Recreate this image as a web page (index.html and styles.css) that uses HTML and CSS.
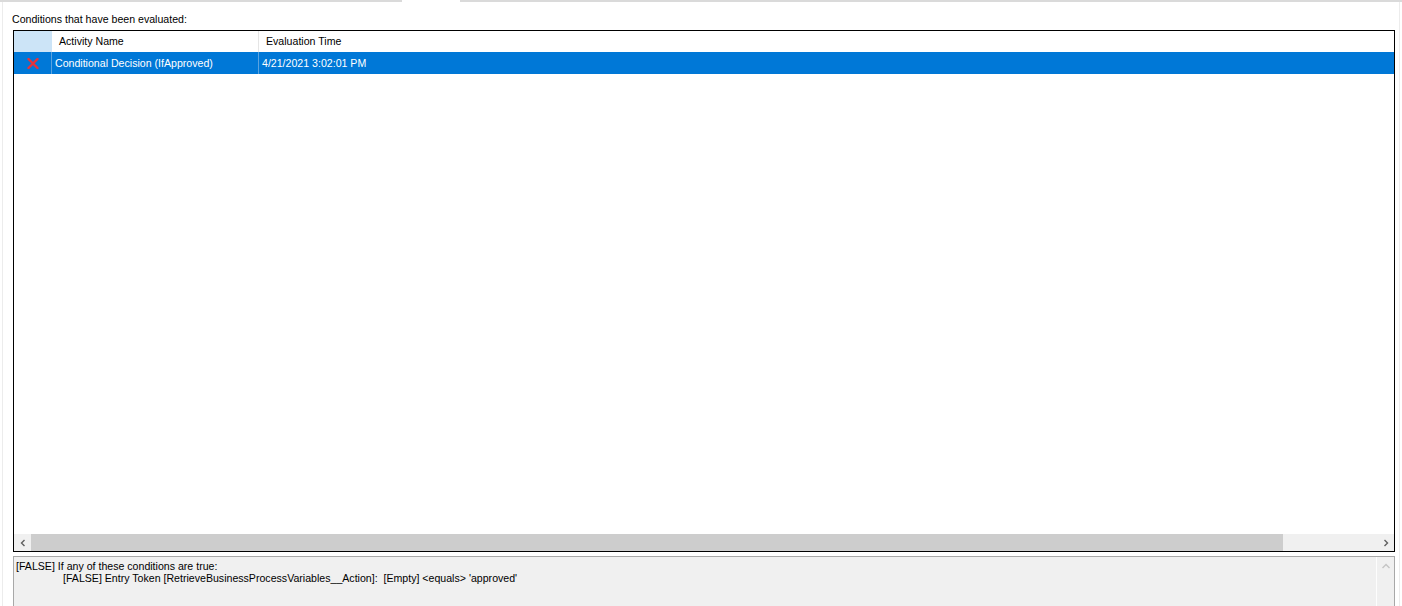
FILE: index.html
```html
<!DOCTYPE html>
<html lang="en">
<head>
  <meta charset="UTF-8" />
  <title>Evaluated Conditions</title>
  <link rel="stylesheet" href="styles.css">
</head>
<body>

  <!-- tab strip edge -->
  <div class="tab-edge">
    <div class="edge-line left"></div>
    <div class="edge-gap"></div>
    <div class="edge-line right"></div>
  </div>

  <div class="panel">
    <div class="caption">Conditions that have been evaluated:</div>

    <!-- List view -->
    <div class="list">
      <div class="list-head">
        <div class="col col-icon"></div>
        <div class="col col-name">Activity Name</div>
        <div class="col col-time">Evaluation Time</div>
      </div>
      <div class="list-row selected">
        <div class="col col-icon">
          <svg width="12" height="11" viewBox="0 0 12 11">
            <path d="M1.5 1 L10.5 10 M10.5 1 L1.5 10" stroke="#e8313a" stroke-width="2.4" stroke-linecap="round"/>
          </svg>
        </div>
        <div class="col col-name">Conditional Decision (IfApproved)</div>
        <div class="col col-time">4/21/2021 3:02:01 PM</div>
      </div>
      <div class="list-body"></div>
      <div class="hscroll">
        <div class="arrow">
          <svg width="8" height="8" viewBox="0 0 8 8"><path d="M5.5 1 L2.5 4 L5.5 7" fill="none" stroke="#606060" stroke-width="1.4"/></svg>
        </div>
        <div class="track"><div class="thumb"></div></div>
        <div class="arrow">
          <svg width="8" height="8" viewBox="0 0 8 8"><path d="M2.5 1 L5.5 4 L2.5 7" fill="none" stroke="#606060" stroke-width="1.4"/></svg>
        </div>
      </div>
    </div>

    <!-- Details text box -->
    <div class="details">
      <div class="details-text">
        <div>[FALSE] If any of these conditions are true:</div>
        <div class="indent">[FALSE] Entry Token [RetrieveBusinessProcessVariables__Action]:&nbsp; [Empty] &lt;equals&gt; 'approved'</div>
      </div>
      <div class="vscroll">
        <svg width="10" height="8" viewBox="0 0 10 8"><path d="M1.5 6 L5 2.5 L8.5 6" fill="none" stroke="#c4c4c4" stroke-width="1.4"/></svg>
      </div>
    </div>
  </div>

</body>
</html>
```

FILE: styles.css
```css
* {
  box-sizing: border-box;
  margin: 0;
  padding: 0;
}

body {
  font-family: "Liberation Sans", Arial, sans-serif;
  font-size: 10.6px;
  color: #000;
  background: #fff;
  width: 1402px;
  height: 606px;
  overflow: hidden;
}

.tab-edge {
  display: flex;
  height: 2px;
}

.edge-line {
  height: 2px;
  background: #dadada;
}

.edge-line.left {
  width: 402px;
}

.edge-gap {
  width: 58px;
}

.edge-line.right {
  flex: 1;
}

.panel {
  margin: 0 2px;
  padding-left: 9px;
  border-left: 1px solid #ececec;
  border-right: 1px solid #ececec;
  height: 604px;
}

.caption {
  height: 28px;
  padding-top: 10px;
  padding-left: 0;
  line-height: 14px;
}

.list {
  border: 1px solid #000;
  width: 1382px;
  height: 522px;
  display: flex;
  flex-direction: column;
  margin-left: 1px;
}

.list-head,
.list-row {
  display: flex;
  height: 21px;
  line-height: 20px;
}

.list-head .col-icon,
.list-head .col-name {
  border-right: 1px solid #e5e5e5;
}

.list-head .col-icon {
  background: #cce4f7;
  border-right: 1px solid #cce4f7;
}

.col-icon {
  width: 38px;
  display: flex;
  align-items: center;
  justify-content: center;
}

.col-name {
  width: 207px;
  padding-left: 7px;
}

.col-time {
  width: 300px;
  padding-left: 7px;
}

.list-row.selected {
  background: #0078d7;
  color: #fff;
  height: 22px;
  line-height: 22px;
}

.list-row .col-icon {
  border-right: 1px solid #5aa3e0;
}

.list-row .col-name {
  padding-left: 3px;
  border-right: 1px solid #5aa3e0;
}

.list-row .col-time {
  padding-left: 3px;
}

.list-body {
  flex: 1;
}

.hscroll {
  display: flex;
  height: 17px;
  background: #f0f0f0;
}

.arrow {
  width: 17px;
  display: flex;
  align-items: center;
  justify-content: center;
}

.track {
  flex: 1;
}

.thumb {
  height: 17px;
  width: 1252px;
  background: #cdcdcd;
}

.details {
  margin-top: 4px;
  margin-left: 1px;
  width: 1382px;
  height: 60px;
  border: 1px solid #a8a8a8;
  border-bottom: none;
  background: #f0f0f0;
  display: flex;
}

.details-text {
  flex: 1;
  padding: 3px 0 0 2px;
  line-height: 12px;
}

.indent {
  padding-left: 47px;
}

.vscroll {
  width: 18px;
  border-left: 1px solid #fdfdfd;
  display: flex;
  justify-content: center;
  padding-top: 5px;
}
```
